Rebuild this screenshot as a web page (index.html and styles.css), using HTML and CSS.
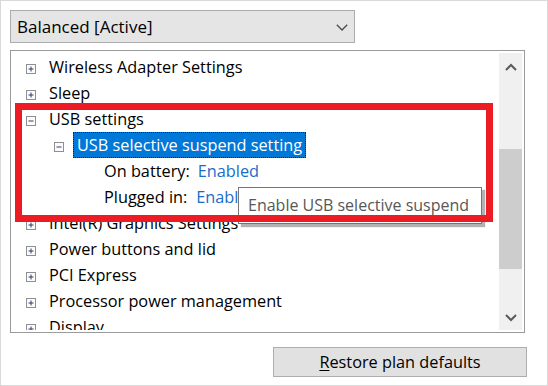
FILE: index.html
```html
<!DOCTYPE html>
<html>
<head>
<meta charset="utf-8">
<link rel="stylesheet" href="styles.css">
</head>
<body>
<div class="frame">
  <div class="combo">
    <span class="combo-text">Balanced [Active]</span>
    <svg class="combo-chev" width="12" height="7" viewBox="0 0 12 7"><path d="M0.8 0.8 L6 6 L11.2 0.8" fill="none" stroke="#4a4a4a" stroke-width="1.3"/></svg>
  </div>
  <div class="tree">
    <div class="list">
      <div class="row l0"><svg class="exp" width="10" height="10" viewBox="0 0 10 10"><rect x="0.5" y="0.5" width="9" height="9" fill="#fbfbfb" stroke="#8f8f8f"/><path d="M2.5 5h5M5 2.5v5" stroke="#26406e"/></svg><span class="label">Wireless Adapter Settings</span></div>
      <div class="row l0"><svg class="exp" width="10" height="10" viewBox="0 0 10 10"><rect x="0.5" y="0.5" width="9" height="9" fill="#fbfbfb" stroke="#8f8f8f"/><path d="M2.5 5h5M5 2.5v5" stroke="#26406e"/></svg><span class="label">Sleep</span></div>
      <div class="row l0"><svg class="exp" width="10" height="10" viewBox="0 0 10 10"><rect x="0.5" y="0.5" width="9" height="9" fill="#fbfbfb" stroke="#8f8f8f"/><path d="M2.5 5h5" stroke="#26406e"/></svg><span class="label">USB settings</span></div>
      <div class="row l1"><svg class="exp" width="10" height="10" viewBox="0 0 10 10"><rect x="0.5" y="0.5" width="9" height="9" fill="#fbfbfb" stroke="#8f8f8f"/><path d="M2.5 5h5" stroke="#26406e"/></svg><span class="label selected">USB selective suspend setting</span></div>
      <div class="row l2"><span class="spacer"></span><span class="label">On battery:<span class="value">Enabled</span></span></div>
      <div class="row l2"><span class="spacer"></span><span class="label">Plugged in:<span class="value value-b">Enabled</span></span></div>
      <div class="row l0"><svg class="exp" width="10" height="10" viewBox="0 0 10 10"><rect x="0.5" y="0.5" width="9" height="9" fill="#fbfbfb" stroke="#8f8f8f"/><path d="M2.5 5h5M5 2.5v5" stroke="#26406e"/></svg><span class="label">Intel(R) Graphics Settings</span></div>
      <div class="row l0"><svg class="exp" width="10" height="10" viewBox="0 0 10 10"><rect x="0.5" y="0.5" width="9" height="9" fill="#fbfbfb" stroke="#8f8f8f"/><path d="M2.5 5h5M5 2.5v5" stroke="#26406e"/></svg><span class="label">Power buttons and lid</span></div>
      <div class="row l0"><svg class="exp" width="10" height="10" viewBox="0 0 10 10"><rect x="0.5" y="0.5" width="9" height="9" fill="#fbfbfb" stroke="#8f8f8f"/><path d="M2.5 5h5M5 2.5v5" stroke="#26406e"/></svg><span class="label">PCI Express</span></div>
      <div class="row l0"><svg class="exp" width="10" height="10" viewBox="0 0 10 10"><rect x="0.5" y="0.5" width="9" height="9" fill="#fbfbfb" stroke="#8f8f8f"/><path d="M2.5 5h5M5 2.5v5" stroke="#26406e"/></svg><span class="label">Processor power management</span></div>
      <div class="row l0"><svg class="exp" width="10" height="10" viewBox="0 0 10 10"><rect x="0.5" y="0.5" width="9" height="9" fill="#fbfbfb" stroke="#8f8f8f"/><path d="M2.5 5h5M5 2.5v5" stroke="#26406e"/></svg><span class="label">Display</span></div>
    </div>
    <div class="scrollbar">
      <div class="arrow up"><svg width="12" height="8" viewBox="0 0 12 8"><path d="M1 7 L6 2 L11 7" fill="none" stroke="#5a5a5a" stroke-width="2"/></svg></div>
      <div class="track"><div class="thumb"></div></div>
      <div class="arrow down"><svg width="12" height="8" viewBox="0 0 12 8"><path d="M1 1 L6 6 L11 1" fill="none" stroke="#5a5a5a" stroke-width="2"/></svg></div>
    </div>
  </div>
  <button class="restore"><u>R</u>estore plan defaults</button>
</div>
<div class="tooltip">Enable USB selective suspend</div>
<div class="redbox"></div>
</body>
</html>
```

FILE: styles.css
```css
html, body {
  margin: 0;
  padding: 0;
  background: #ffffff;
}
body {
  position: relative;
  width: 548px;
  height: 386px;
  overflow: hidden;
  font-family: "Open Sans", "Noto Sans", sans-serif;
  font-size: 16.3px;
  font-weight: 500;
  color: #000;
}
.frame {
  box-sizing: border-box;
  width: 548px;
  height: 386px;
  border: 1px solid #d9d9d9;
  padding: 9px 0 0 9px;
}
.combo {
  box-sizing: border-box;
  width: 345px;
  height: 33px;
  border: 1px solid #acacac;
  background: #e5e5e5;
  display: flex;
  align-items: center;
  padding-left: 6px;
  padding-right: 6px;
}
.combo-text {
  flex: 1;
  font-size: 17px;
  line-height: 31px;
}
.combo-chev {
  margin-top: 1px;
}
.tree {
  box-sizing: border-box;
  margin-top: 7px;
  width: 515px;
  height: 283px;
  border: 1px solid #9a9a9a;
  padding: 2px 2px 2px 0;
  display: flex;
}
.list {
  flex: 1;
  overflow: hidden;
  padding-top: 1px;
}
.row {
  display: flex;
  align-items: flex-start;
  height: 26px;
  line-height: 26px;
  white-space: nowrap;
}
.l0 { padding-left: 15px; }
.l1 { padding-left: 43px; }
.l2 { padding-left: 71px; }
.exp {
  flex: none;
  margin-top: 10px;
  margin-right: 9px;
}
.spacer {
  width: 10px;
  flex: none;
  margin-right: 8px;
}
.label {
  padding: 0 4px;
}
.selected {
  box-sizing: border-box;
  height: 26px;
  line-height: 24px;
  padding: 0 3px;
  background: #0078d7;
  color: #ffffff;
  border: 1px dotted #222;
}
.value {
  color: #1a6cc8;
  margin-left: 8px;
}
.value-b {
  margin-left: 9px;
}
.scrollbar {
  width: 23px;
  flex: none;
  background: #f0f0f0;
  display: flex;
  flex-direction: column;
}
.arrow {
  height: 23px;
  display: flex;
  justify-content: center;
}
.arrow svg { display: block; }
.arrow.up { padding-top: 10px; box-sizing: border-box; }
.arrow.down { padding-top: 7px; box-sizing: border-box; }
.track { flex: 1; }
.thumb {
  margin-top: 73px;
  height: 120px;
  background: #cdcdcd;
}
.restore {
  display: block;
  box-sizing: border-box;
  margin: 14px 0 0 263px;
  width: 254px;
  height: 30px;
  border: 1px solid #adadad;
  background: #e1e1e1;
  font-family: "Open Sans", "Noto Sans", sans-serif;
  font-size: 16.3px;
  font-weight: 500;
  line-height: 27px;
  color: #000;
  padding: 0;
}
.restore u { text-underline-offset: 2px; }
.tooltip {
  position: absolute;
  left: 238px;
  top: 187px;
  box-sizing: border-box;
  width: 244px;
  height: 37px;
  border: 1px solid #767676;
  background: #ffffff;
  color: #575757;
  font-size: 16px;
  font-weight: 400;
  padding-left: 9px;
  line-height: 35px;
  white-space: nowrap;
  box-shadow: 3px 3px 1px rgba(0, 0, 0, 0.3);
}
.redbox {
  position: absolute;
  left: 15px;
  top: 103px;
  width: 478px;
  height: 119px;
  box-sizing: border-box;
  border: 7px solid #ed1c24;
}
```
